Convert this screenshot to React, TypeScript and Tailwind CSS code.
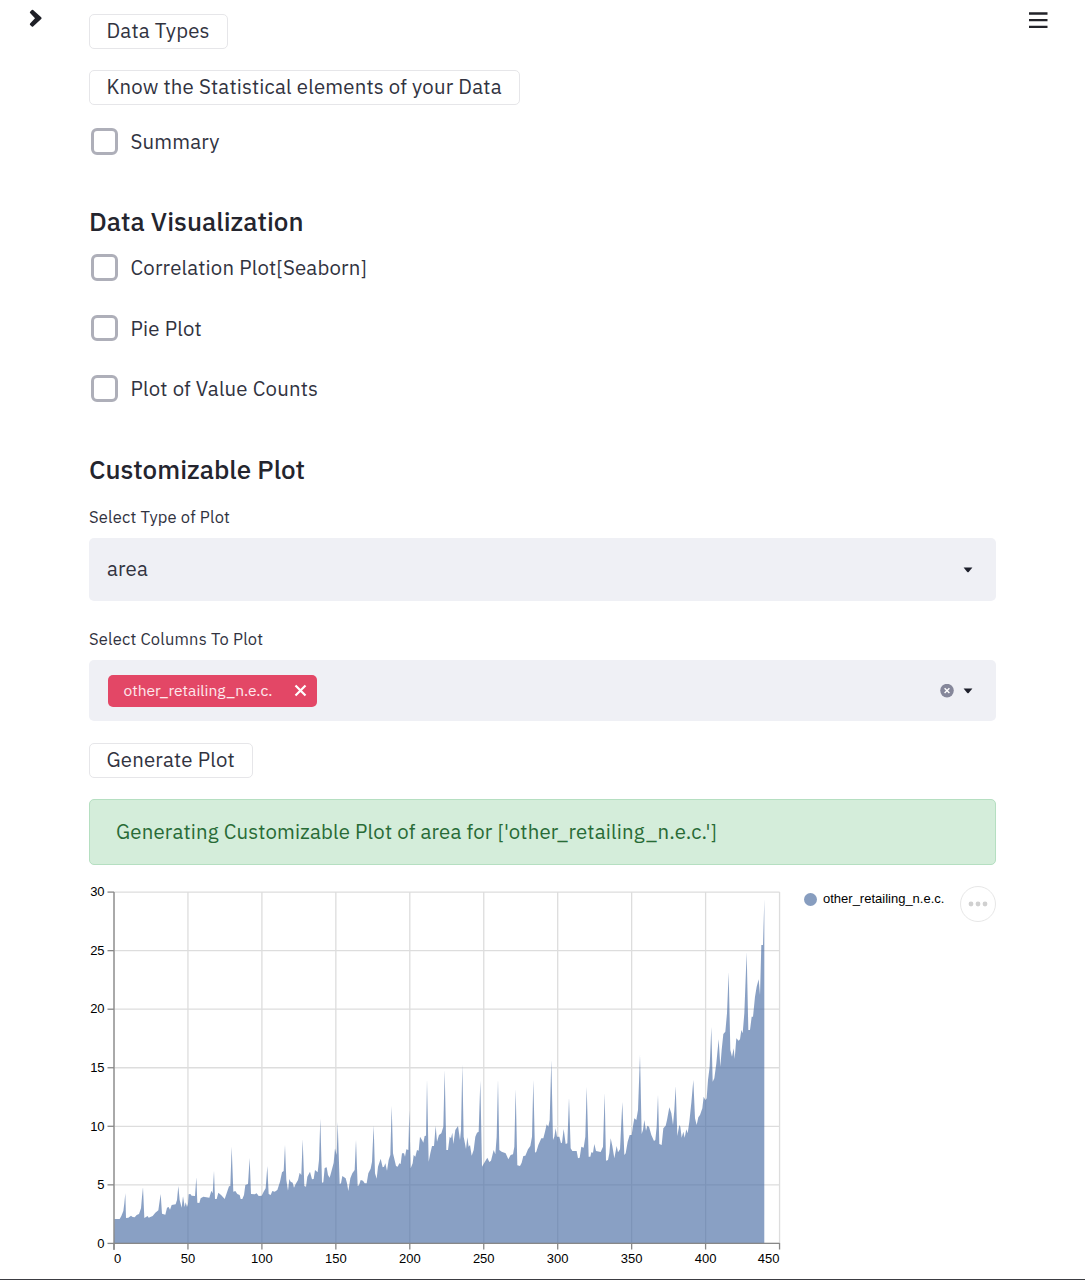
import React from "react";

const PLEX = "font-['IBM_Plex_Sans','Roboto',sans-serif]";

type Run = { dx: number; dy: number; points: string };

// Area outline, stored in thirds of a pixel; each run has its own origin.
const RUNS: Run[] = [
  {
    dx: 0,
    dy: 200,
    points:
      "103,417 119,417 124,408 130,393 133,370 136,340 138,414 145,413 153,407 158,411 164,412 170,405 177,402 183,385 186,350 189,322 193,414 203,408 206,413 218,408 226,398 235,391 238,370 242,342 246,401 256,404 261,383 266,381 270,389 275,375 287,373 291,360 295,318 299,360 305,383 309,349 314,381 317,367 321,381 324,372 326,343 331,342 335,347 345,348 349,292 352,368 358,369 362,355 370,350 388,353 394,332 398,340 402,273 405,357 410,357 415,338 424,346 434,357 440,340 447,319 451,318 455,200 460,335 466,333 472,342 479,345 482,357 487,357 492,345 496,315 504,312 509,234 513,342 524,343 530,340 536,348 545,347 551,335 557,325 562,258 566,342 572,345 577,333 584,335 592,330 600,305 606,277 611,273 615,195 619,300 624,332 628,297 632,305 638,308 642,323 647,312 654,300 659,278 664,285 668,178 673,318 678,320 682,290 690,275 696,298 701,297 705,270 713,277 717,240",
  },
  {
    dx: 220,
    dy: 160,
    points:
      "61,236 66,428 70,427 74,384 80,382 84,405 89,413 94,395 101,368 105,325 110,345 113,246 119,432 123,430 127,408 137,415 141,430 145,453 151,415 157,400 164,390 168,300 173,438 177,436 182,420 189,422 194,430 200,430 205,400 212,386 216,365 221,256 225,400 230,416 234,380 242,356 248,382 252,380 256,370 261,392 266,360 271,345 275,198 279,340 288,378 293,380 298,370 302,372 306,340 312,340 315,350 319,328 325,330 328,212 332,385 338,370 341,345 346,350 351,330 356,332 360,290 366,300 370,308 374,288 378,287 381,119 386,365 391,340 396,318 402,318 407,257 411,305 417,285 424,280 430,260 434,91 439,330 444,330 449,290 453,295 457,278 460,312 466,270 474,258 480,300 483,270 487,74 491,290 498,327 502,292 506,320 510,315 515,347 521,330 526,290 531,278 536,275",
  },
  {
    dx: 400,
    dy: 160,
    points:
      "1,122 6,380 12,370 22,353 28,366 33,362 41,330 46,343 50,290 54,119 58,330 65,335 77,340 85,358 92,345 99,343 103,320 107,148 112,376 120,378 125,368 130,348 136,347 144,328 151,318 156,290 160,120 165,338 169,335 175,315 184,295 190,295 195,275 200,253 205,260 209,240 214,61 219,300 223,290 227,265 231,290 238,290 243,310 246,308 251,267 257,312 262,310 267,173 272,325 277,333 290,333 294,355 299,353 304,320 311,323 316,290 320,141 326,350 331,350 334,337 339,338 343,312 348,333 362,336 369,320 374,160 378,362 384,360 388,340 392,295 397,318 403,355 410,318 414,337 420,328 427,186 433,345 437,340 443,305 449,285 455,285 459,258 463,235 469,240 474,210 480,44",
  },
  {
    dx: 560,
    dy: 0,
    points:
      "5,762 9,750 13,720 18,752 22,737 27,740 34,765 42,783 46,780 50,740 54,645 58,792 65,795 70,745 77,737 81,720 88,682 94,700 99,735 103,690 107,619 112,768 118,735 121,740 125,773 130,755 134,773 139,748 143,760 148,725 154,668 160,600 165,715 170,735 175,712 180,705 187,685 191,650 196,660 200,655 204,600 209,560 214,441 218,605 223,595 229,550 236,478 241,560 245,510 250,462 256,455 261,400 266,277 271,510 276,530 281,505 284,537 289,475 296,482 300,478 304,450 308,460 313,400 320,217 325,450 330,450 335,410 339,410 345,350 350,320 356,298 360,345 364,195 369,195 373,58",
  },
];

const outline = RUNS.flatMap(({ dx, dy, points }) =>
  points.split(" ").map((p) => {
    const [x, y] = p.split(",").map(Number);
    return `${(x / 3 + dx).toFixed(2)},${(y / 3 + dy).toFixed(2)}`;
  }),
).join(" ");

const AREA = `34,363.3 ${outline} 684.3,363.3`;

function Chart() {
  const xs = [0, 50, 100, 150, 200, 250, 300, 350, 400, 450];
  const ys = [0, 5, 10, 15, 20, 25, 30];
  return (
    <svg width="720" height="396" viewBox="0 0 720 396" className="-ml-[9px] block shrink-0 font-['Liberation_Sans',Arial,sans-serif] text-[13px]">
      {xs.map((v) => (
        <line key={v} x1={34 + v * 1.479} x2={34 + v * 1.479} y1="12" y2="363" stroke="#dddddd" strokeWidth="1.3" />
      ))}
      {ys.map((v) => (
        <line key={v} x1="34" x2="699.6" y1={363.4 - v * 11.71} y2={363.4 - v * 11.71} stroke="#dddddd" strokeWidth="1.3" />
      ))}
      <polygon points={AREA} fill="#4c6fa5" fillOpacity="0.66" />
      <path d="M34 12V370M34 363.4H699.6" fill="none" stroke="#888888" strokeWidth="1.3" />
      {xs.map((v) => (
        <g key={v}>
          <line x1={34 + v * 1.479} x2={34 + v * 1.479} y1="363" y2="369.5" stroke="#888888" strokeWidth="1.3" />
          <text
            x={v === 0 ? 34 : v === 450 ? 699.5 : 34 + v * 1.479}
            y="383.3"
            textAnchor={v === 0 ? "start" : v === 450 ? "end" : "middle"}
          >
            {v}
          </text>
        </g>
      ))}
      {ys.map((v) => (
        <g key={v}>
          <line x1="27.5" x2="34" y1={363.4 - v * 11.71} y2={363.4 - v * 11.71} stroke="#888888" strokeWidth="1.3" />
          <text x="24.6" y={367.6 - v * 11.71} textAnchor="end">
            {v}
          </text>
        </g>
      ))}
    </svg>
  );
}

function Button({ label, className }: { label: string; className: string }) {
  return (
    <button className={`flex h-[35px] items-center rounded-[5px] border border-[#e6e6e9] bg-white pl-[16.5px] text-[20.4px] tracking-[0.18px] whitespace-nowrap ${className}`}>
      {label}
    </button>
  );
}

function Checkbox({ label }: { label: string }) {
  return (
    <label className="flex h-[27px] items-center pl-[2px] text-[20.4px]">
      <span className="h-[26.5px] w-[26.5px] shrink-0 rounded-[6px] border-[3px] border-[#aeafb9] bg-white" />
      <span className="pt-[2px] pl-[13px] tracking-[0.17px] whitespace-nowrap">{label}</span>
    </label>
  );
}

function Caret() {
  return (
    <svg width="10" height="6" viewBox="0 0 10 6" className="shrink-0">
      <path d="M0.6 0.5H9.4L5.7 4.9Q5 5.7 4.3 4.9Z" fill="#1d1f2b" />
    </svg>
  );
}

export default function App() {
  return (
    <div className={`flex h-[1280px] w-[1085px] items-start overflow-hidden border-b border-[#3c3d42] bg-white text-[#31333f] ${PLEX}`}>
      <div className="w-[89px] shrink-0 pt-[9px] pl-[29px]">
        <svg width="15" height="19" viewBox="0 0 15 19" className="block">
          <path d="M4.1 0.9L12.2 8.3Q13.1 9.2 12.2 10.1L4.1 17.6Q3.4 18.1 2.8 17.5L1.1 15.9Q0.5 15.2 1.1 14.6L6 9.2L1.1 4Q0.5 3.4 1.1 2.7L2.8 1Q3.4 0.4 4.1 0.9Z" fill="#1f2027" />
        </svg>
      </div>

      <main className="flex w-[907px] shrink-0 flex-col pt-[14px]">
        <Button label="Data Types" className="w-[139px]" />
        <Button label="Know the Statistical elements of your Data" className="mt-[21px] w-[431px]" />
        <div className="mt-[23px]">
          <Checkbox label="Summary" />
        </div>

        <h2 className="mt-[50px] h-[32px] text-[26px] leading-[32px] font-medium whitespace-nowrap text-[#24252e]">
          Data Visualization
        </h2>
        <div className="mt-[17px] flex flex-col gap-[33.5px]">
          <Checkbox label="Correlation Plot[Seaborn]" />
          <Checkbox label="Pie Plot" />
          <Checkbox label="Plot of Value Counts" />
        </div>

        <h2 className="mt-[51px] h-[32px] text-[26px] leading-[32px] font-medium whitespace-nowrap text-[#24252e]">
          Customizable Plot
        </h2>
        <div className="mt-[21px] h-[22px] text-[16.5px] leading-[22px] tracking-[0.18px] whitespace-nowrap">Select Type of Plot</div>
        <div className="mt-[10px] flex h-[63px] items-center justify-between rounded-[5px] bg-[#eff0f5] pr-[23px] pl-[18px] text-[20.4px]">
          <span className="tracking-[0.17px]">area</span>
          <Caret />
        </div>

        <div className="mt-[27px] h-[22px] text-[16.5px] leading-[22px] tracking-[0.18px] whitespace-nowrap">Select Columns To Plot</div>
        <div className="mt-[10px] flex h-[61px] items-center rounded-[5px] bg-[#eff0f5] pr-[23px] pl-[19px]">
          <div className="flex h-[32px] w-[209px] items-center justify-between rounded-[5px] bg-[#e34766] pr-[10px] pl-[15.5px] text-[15.6px] text-[#fde8ec]">
            <span>other_retailing_n.e.c.</span>
            <svg width="13" height="13" viewBox="0 0 13 13">
              <path d="M1.5 1.5L11.5 11.5M11.5 1.5L1.5 11.5" stroke="white" strokeWidth="2.2" />
            </svg>
          </div>
          <svg width="14" height="14" viewBox="0 0 14 14" className="mr-[9px] ml-auto">
            <circle cx="7" cy="6.6" r="6.8" fill="#85879a" />
            <path d="M4.6 4.2L9.4 9M9.4 4.2L4.6 9" stroke="white" strokeWidth="1.4" />
          </svg>
          <Caret />
        </div>

        <Button label="Generate Plot" className="mt-[22px] w-[164px]" />

        <div className="mt-[21px] flex h-[66px] items-center rounded-[5px] border border-[#b5dfc1] bg-[#d4edda] pl-[26px] text-[20.4px] whitespace-nowrap text-[#286b36]">
          <span className="tracking-[0.17px]">Generating Customizable Plot of area for ['other_retailing_n.e.c.']</span>
        </div>

        <div className="mt-[15px] flex items-start">
          <Chart />
          <div className="mt-[12px] ml-[4px] flex items-center gap-[6px] font-['Liberation_Sans',Arial,sans-serif] text-[13px] leading-[14px] text-black">
            <span className="h-[13px] w-[13px] rounded-full bg-[#879dbf]" />
            <span>other_retailing_n.e.c.</span>
          </div>
          <div className="mt-[6px] ml-auto flex h-[36px] w-[36px] shrink-0 items-center justify-center rounded-full border border-[#e7e7e7]">
            <svg width="20" height="6" viewBox="0 0 20 6" fill="#d0d0d0" className="-mt-[1px]">
              <circle cx="3" cy="3" r="2.4" />
              <circle cx="10" cy="3" r="2.4" />
              <circle cx="17" cy="3" r="2.4" />
            </svg>
          </div>
        </div>
      </main>

      <div className="pt-[12px] pl-[33px]">
        <svg width="19" height="17" viewBox="0 0 19 17" className="block">
          <path d="M0 1.5H18.5M0 8.2H18.5M0 14.9H18.5" stroke="#222329" strokeWidth="2.3" />
        </svg>
      </div>
    </div>
  );
}
